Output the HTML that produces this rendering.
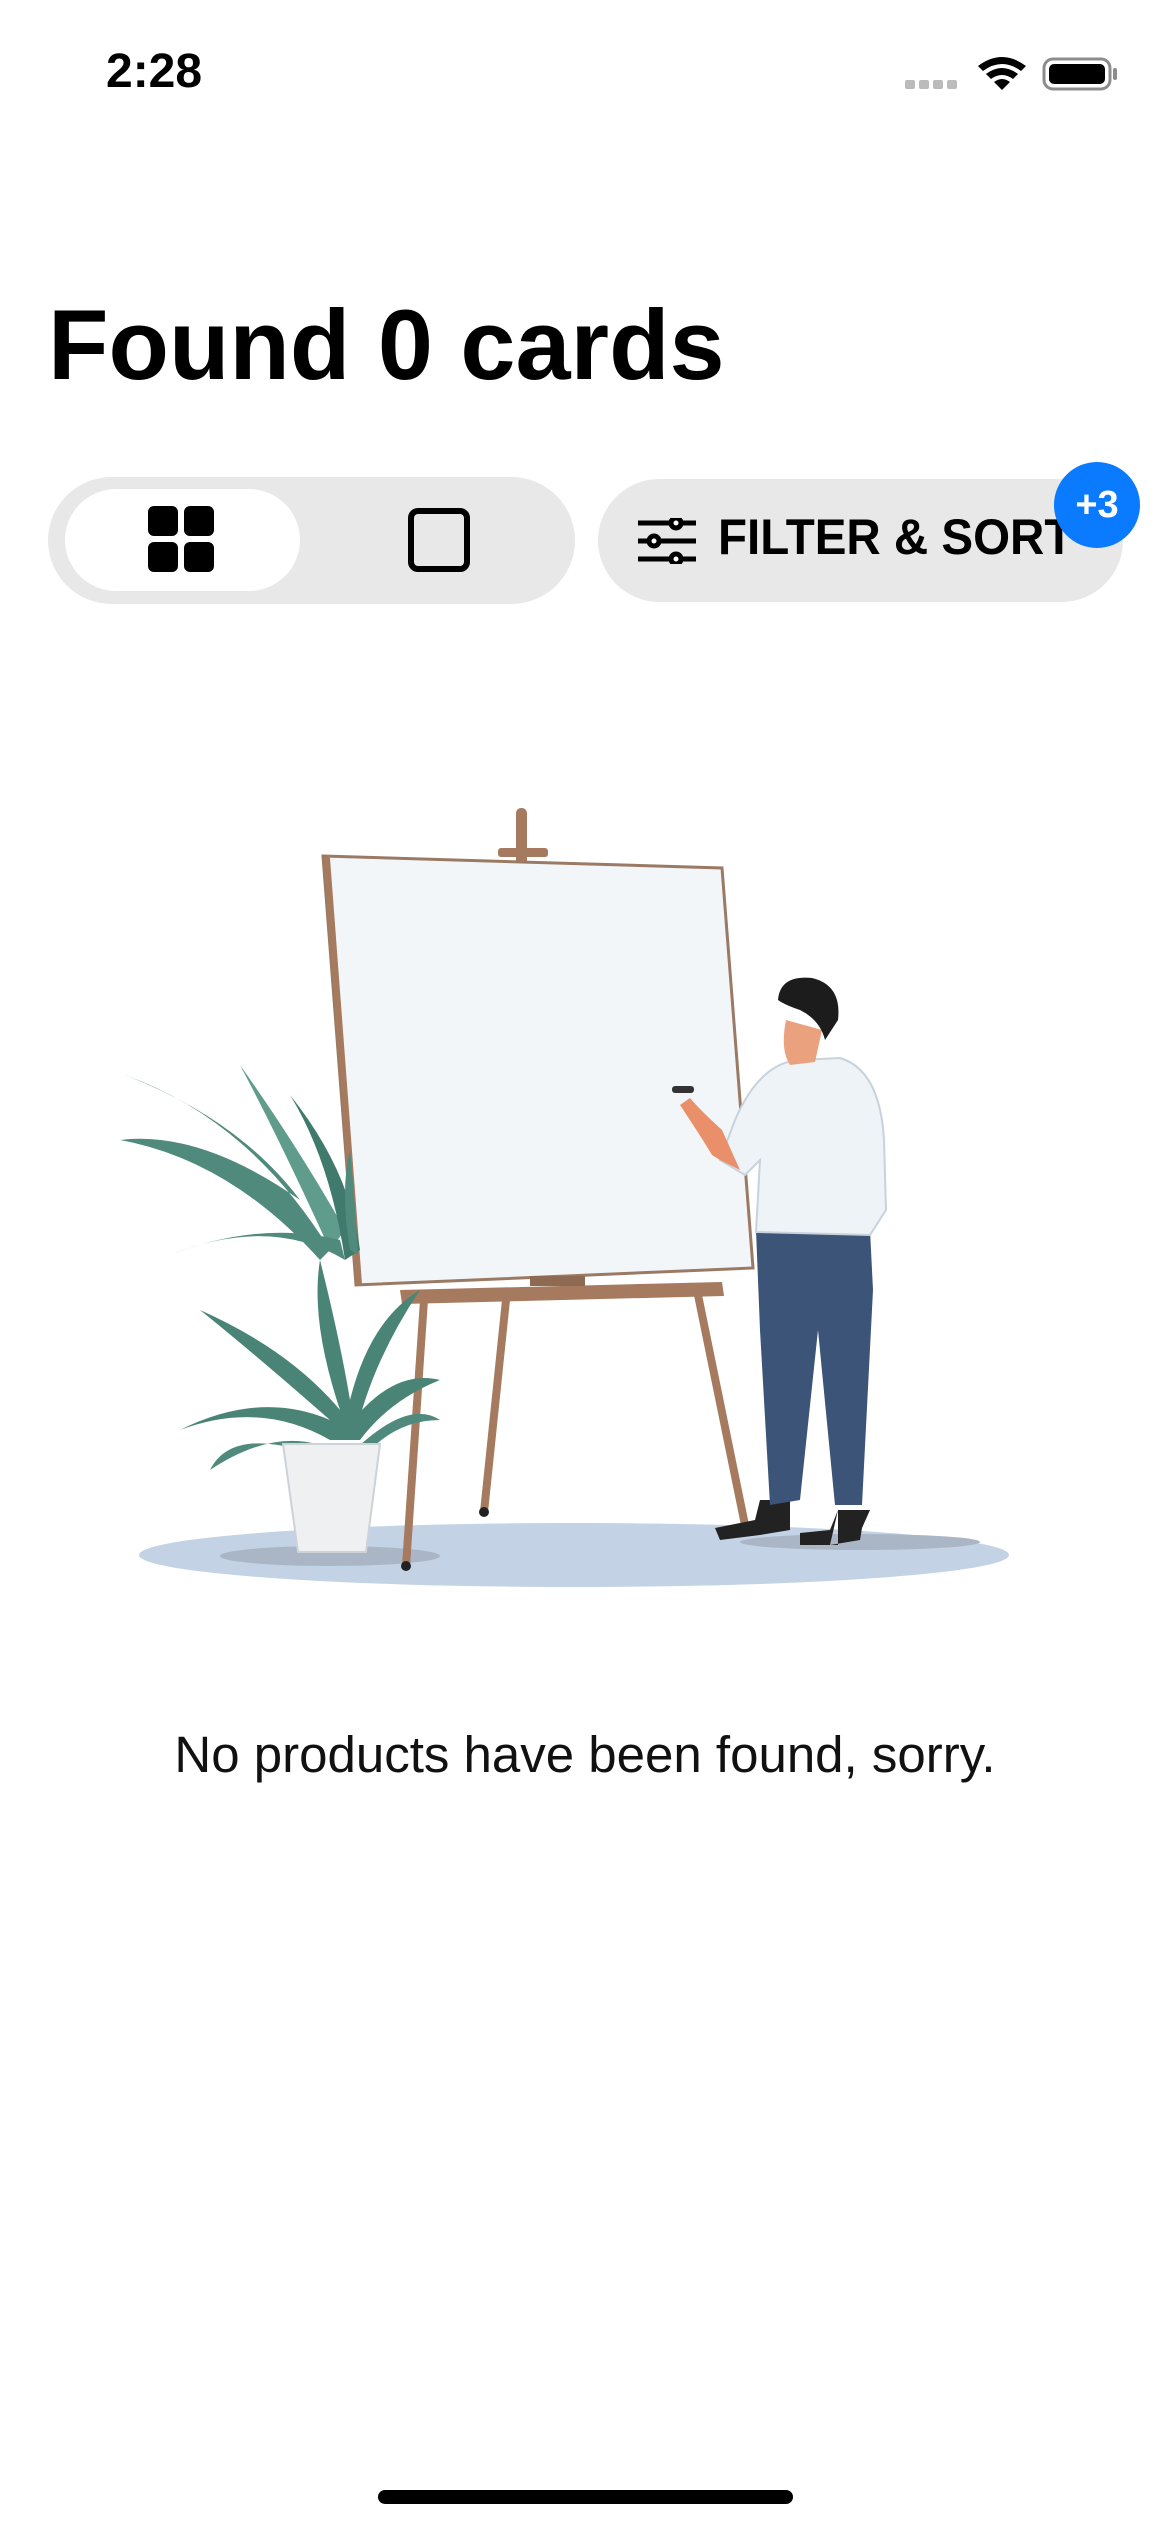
<!DOCTYPE html>
<html><head><meta charset="utf-8"><style>
*{margin:0;padding:0;box-sizing:border-box}
body{width:1170px;height:2532px;background:#fff;font-family:"Liberation Sans",sans-serif;position:relative;overflow:hidden}
.abs{position:absolute}
</style></head><body>
<div class="abs" style="left:106px;top:44px;font-size:48px;font-weight:bold;color:#000">2:28</div>
<svg class="abs" style="left:905px;top:54px" width="215" height="40" viewBox="0 0 215 40">
<g fill="#bbb"><rect x="0" y="26" width="10" height="9" rx="2"/><rect x="14" y="26" width="10" height="9" rx="2"/><rect x="28" y="26" width="10" height="9" rx="2"/><rect x="42" y="26" width="10" height="9" rx="2"/></g>
<path d="M73 12 Q97 -6 121 12 L116 17 Q97 3 78 17 Z M81 20 Q97 8 113 20 L108 25 Q97 17 86 25 Z M89 28 Q97 22 105 28 L97 36 Z" fill="#000"/>
<rect x="139" y="5" width="66" height="30" rx="9" fill="none" stroke="#000" stroke-width="3" opacity=".45"/>
<rect x="144" y="10" width="56" height="20" rx="5" fill="#000"/>
<rect x="208" y="14" width="4" height="12" rx="2" fill="#000" opacity=".45"/>
</svg>
<div class="abs" style="left:48px;top:288px;font-size:99px;font-weight:bold;color:#000">Found 0 cards</div>
<div class="abs" style="left:48px;top:477px;width:527px;height:127px;border-radius:64px;background:#e8e8e8"></div>
<div class="abs" style="left:65px;top:489px;width:235px;height:102px;border-radius:51px;background:#fff"></div>
<svg class="abs" style="left:148px;top:506px" width="68" height="68" viewBox="0 0 68 68"><g fill="#000"><rect x="0" y="0" width="30" height="30" rx="6"/><rect x="36" y="0" width="30" height="30" rx="6"/><rect x="0" y="36" width="30" height="30" rx="6"/><rect x="36" y="36" width="30" height="30" rx="6"/></g></svg>
<div class="abs" style="left:408px;top:508px;width:62px;height:64px;border:6px solid #000;border-radius:10px"></div>
<div class="abs" style="left:598px;top:479px;width:525px;height:123px;border-radius:62px;background:#e8e8e8"></div>
<svg class="abs" style="left:638px;top:518px" width="58" height="46" viewBox="0 0 58 46"><g stroke="#000" stroke-width="5" fill="#fff"><line x1="0" y1="5" x2="58" y2="5"/><line x1="0" y1="23" x2="58" y2="23"/><line x1="0" y1="41" x2="58" y2="41"/><circle cx="38" cy="5" r="5"/><circle cx="16" cy="23" r="5"/><circle cx="38" cy="41" r="5"/></g></svg>
<div class="abs" style="left:718px;top:508px;font-size:50px;font-weight:bold;color:#000;transform:scaleX(.95);transform-origin:left">FILTER &amp; SORT</div>
<div class="abs" style="left:1054px;top:462px;width:86px;height:86px;border-radius:50%;background:#0a7aff;color:#fff;font-size:38px;font-weight:bold;text-align:center;line-height:86px">+3</div>
<svg class="abs" style="left:0;top:780px" width="1170" height="840" viewBox="0 780 1170 840">
<ellipse cx="574" cy="1555" rx="435" ry="32" fill="#c3d2e4"/>
<ellipse cx="330" cy="1556" rx="110" ry="10" fill="#aab6c6"/>
<ellipse cx="860" cy="1542" rx="120" ry="8" fill="#aab6c6"/>
<rect x="516" y="808" width="11" height="60" rx="5" fill="#a57a5e"/>
<rect x="498" y="848" width="50" height="9" rx="3" fill="#a57a5e"/>
<g stroke="#a57a5e" stroke-width="8" stroke-linecap="round"><line x1="424" y1="1300" x2="406" y2="1566"/><line x1="506" y1="1300" x2="484" y2="1512"/><line x1="698" y1="1295" x2="745" y2="1525"/></g>
<circle cx="406" cy="1566" r="5" fill="#222"/><circle cx="484" cy="1512" r="5" fill="#222"/>
<path d="M323 856 L722 868 L753 1268 L356 1285 Z" fill="#f3f6f9" stroke="#9a7a64" stroke-width="3"/>
<path d="M330 858 L323 856 L356 1285 L362 1284 Z" fill="#a57a5e"/>
<path d="M400 1290 L722 1282 L724 1296 L402 1304 Z" fill="#a57a5e"/>
<rect x="530" y="1276" width="55" height="10" fill="#8f6a52"/>
<g fill="#4f8a7c">
<path d="M330 1250 Q250 1120 125 1075 Q240 1120 300 1200 Q200 1130 120 1140 Q230 1160 320 1260Z"/>
<path d="M330 1250 Q280 1140 240 1065 Q300 1150 345 1230Z" fill="#5f9c8c"/>
<path d="M345 1260 Q330 1160 290 1095 Q350 1170 360 1250Z" fill="#3f7a6c"/>
<path d="M340 1240 Q260 1220 170 1255 Q270 1215 345 1260Z"/>
<path d="M350 1250 Q340 1190 350 1150 Q355 1200 358 1255Z"/>
<path d="M330 1440 Q260 1400 180 1430 Q260 1390 330 1420 Q250 1350 200 1310 Q290 1350 340 1410 Q310 1320 320 1260 Q340 1340 350 1400 Q370 1320 420 1290 Q380 1350 362 1410 Q400 1370 440 1380 Q390 1400 360 1440Z" fill="#4a8476"/>
<path d="M300 1450 Q230 1430 210 1470 Q270 1430 320 1445Z"/>
<path d="M360 1445 Q410 1400 440 1420 Q400 1420 370 1450Z"/>
</g>
<path d="M283 1444 L380 1444 L366 1552 L298 1552 Z" fill="#eef0f2" stroke="#ccd2d8" stroke-width="2"/>
<path d="M838 1510 L830 1530 L800 1533 L800 1545 L838 1545Z M838 1510 L870 1510 L862 1528 L860 1540 L830 1545Z" fill="#222"/>
<path d="M760 1500 L790 1500 L790 1530 L760 1535 L720 1540 L715 1528 L755 1520Z" fill="#222"/>
<path d="M756 1230 L870 1230 L873 1290 L862 1505 L835 1505 L818 1330 L800 1500 L770 1505 L760 1330 Z" fill="#3b5478"/>
<path d="M735 1120 Q760 1062 800 1060 L840 1058 Q880 1070 884 1140 L886 1210 L870 1235 L756 1232 L760 1160 L745 1175 L720 1160Z" fill="#eef3f8" stroke="#c8d2dc" stroke-width="2"/>
<path d="M720 1160 L740 1170 L722 1130 Q700 1110 690 1098 L680 1105 Q700 1135 712 1155Z" fill="#e9906a"/>
<rect x="672" y="1086" width="22" height="7" rx="3" fill="#333"/>
<path d="M786 1020 Q780 1050 790 1065 L815 1062 L822 1030 Z" fill="#eaa27e"/>
<path d="M778 1000 Q780 975 812 978 Q842 985 838 1020 L825 1040 Q820 1020 800 1010 Q785 1005 778 1000Z" fill="#1c1c1c"/>
</svg>
<div class="abs" style="left:0;width:1170px;top:1725px;text-align:center;font-size:51px;color:#111">No products have been found, sorry.</div>
<div class="abs" style="left:378px;top:2490px;width:415px;height:14px;border-radius:7px;background:#000"></div>
</body></html>
